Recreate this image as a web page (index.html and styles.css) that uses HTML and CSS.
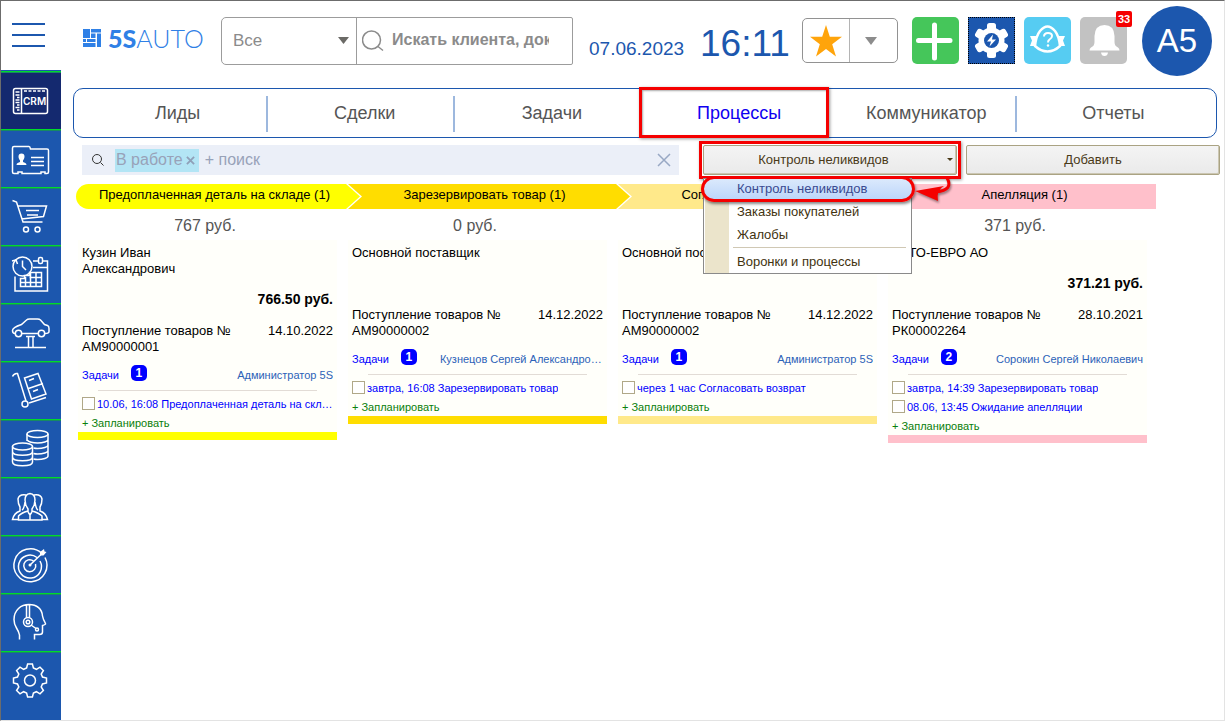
FILE: index.html
```html
<!DOCTYPE html>
<html lang="ru">
<head>
<meta charset="utf-8">
<title>5S AUTO — Процессы</title>
<link rel="stylesheet" href="styles.css">
</head>
<body>
<div class="app">
  <aside class="side">
    <button class="burger" type="button" aria-label="Меню"><span></span><span></span><span></span></button>
    <nav class="side-nav" aria-label="Разделы">
      <a class="side-item active" href="#" aria-label="CRM"><svg viewBox="0 0 44 44"><rect x="4.500" y="9.500" width="34" height="25" rx="2"/><path d="M12.500 10v24M6.500 13h4M6.500 16h4M8 18.500h2.500M6.500 21h4M6.500 23.500h4M8 26h2.500M6.500 28.500h4M8 31h2.500"/><path d="M15 12h22" stroke-dasharray="3 1.500"/><text x="14" y="26">CRM</text></svg></a>
      <a class="side-item" href="#" aria-label="Контакты"><svg viewBox="0 0 44 44"><path d="M5 9.500H20q1 0 1.500 2.500H38q1.500 0 1.500 1.500V35q0 1.500-1.500 1.500H36v-1.500h-4v1.500H13v-1.500H9v1.500H5q-1.500 0-1.500-1.500V11q0-1.500 1.500-1.500Z"/><path class="fill" d="M12.500 16.500c2 0 3 1.200 3 3s-.8 3-1.500 4v1.500c1.500.7 3.500 1 3.500 3H7.500c0-2 2-2.300 3.500-3V23.500c-.7-1-1.500-2.200-1.500-4s1-3 3-3Z"/><path d="M22 20.500h13M22 24.500h13M22 28.500h13"/></svg></a>
      <a class="side-item" href="#" aria-label="Корзина"><svg viewBox="0 0 44 44"><path d="M3.500 5.500l4 1.500L14 27H33.500M9 11H37.500L34.500 21.500L12.500 24M17 15.500h13M18 20h11"/><circle cx="17" cy="34.500" r="2.500"/><circle cx="28.500" cy="34.500" r="2.500"/></svg></a>
      <a class="side-item" href="#" aria-label="Календарь"><svg viewBox="0 0 44 44"><circle cx="13.500" cy="13.500" r="9.500"/><path d="M13.500 7.500v6l3.500 3.500M3 8l4-1 1.500 4M6 23.500V38H38.500V8H34M29.500 8H24M24 14.500H38.500"/><rect x="29.500" y="4.500" width="4" height="6" rx="1.500"/><path d="M11.500 25.500h4v-3h5v-3H32.500V33.500H11.500ZM11.500 29.500h21M20.500 24.500h12M16.500 24v9.500M21.500 20v13.500M27 20v13.500"/></svg></a>
      <a class="side-item" href="#" aria-label="Автосервис"><svg viewBox="0 0 44 44"><path d="M6 22.500q-2.500 0-2.500-3 0-3 9-6L17.500 9q1-1 3-1h8q2 0 3 1l4 4.500 3 1q1.500.5 1.500 3v3q0 2-4 2M13 22.500H29M17 25.500H26M19.500 26V36.500M24 26V36.500M6 36.500H37"/><circle cx="9.500" cy="22.500" r="3.200"/><circle cx="32.500" cy="22.500" r="3.200"/></svg></a>
      <a class="side-item" href="#" aria-label="Склад"><svg viewBox="0 0 44 44"><path d="M3.500 7.500Q5 4 8.500 4.500L17 32M15.500 9L29 4.500L37 25L22.500 30ZM19.500 19.500L34 14.500M20 11.500l5-2M24 22.500l5-2M20 34L37 28.500"/><circle cx="16" cy="35" r="3"/></svg></a>
      <a class="side-item" href="#" aria-label="Финансы"><svg viewBox="0 0 44 44"><ellipse cx="28.500" cy="7" rx="10.500" ry="3.500"/><path d="M18 7v7M39 7V29c0 2-5 3.500-10.500 3.500q-2 0-4-.5M39 12.500c0 2-5 3.500-10.500 3.500Q21 16 18 13M39 18c0 2-5 3.500-10.500 3.500q-2 0-4-.5M39 23.500c0 2-5 3.500-10.500 3.500q-2 0-4-.5"/><ellipse cx="13.500" cy="19.500" rx="10" ry="3.500"/><path d="M3.500 19.500V35c0 5 20 5 20 0V19.500M3.500 24.500c0 5 20 5 20 0M3.500 30c0 5 20 5 20 0"/></svg></a>
      <a class="side-item" href="#" aria-label="Клиенты"><svg viewBox="0 0 44 44"><path d="M16 15q0-6 5-6.500 5 .5 5 6.500 0 5-3 9v3M16 15q0 5 3 9v3M17 10q-7-1-8 4 0 5 2 8v4q-6 2-7.500 8.500H9M25 10q7-1 8 4 0 5-2 8v4q6 2 7.500 8.500H33M19 26q-7 2-9.500 5v4H33V31q-3-3-10-5M19 27l2 3 2-3M21 30v5M16 17q-1 7-3 8M26 17q1 7 3 8"/></svg></a>
      <a class="side-item" href="#" aria-label="Цели"><svg viewBox="0 0 44 44"><path d="M32.500 10A16.500 16.500 0 1 0 36 14.500M28 14.500A11.500 11.500 0 1 0 31 18M24.500 18A6 6 0 1 0 26.500 21M21 22L32 11.500"/><circle class="fill" cx="21" cy="22" r="1.500"/><path class="fill" d="M31 12.500V9l4-3 .5 2.500L37.500 9l-3 3.500Z"/></svg></a>
      <a class="side-item" href="#" aria-label="Поддержка"><svg viewBox="0 0 44 44"><path d="M10.500 38.500V34Q10 31 7.500 27 5 23 5 18.500C5 9 12 3.500 20 3.500S33 8 33.500 15q.5 3 3 7.500.5 1-3 2V31q0 2.500-3 2.500H25.500v5M17.500 4v13M20.500 4v13M22 24l5 3.500"/><circle cx="19" cy="21" r="4.500"/><circle cx="19" cy="21" r="1.800"/><circle cx="28" cy="28.500" r="1.500"/></svg></a>
      <a class="side-item" href="#" aria-label="Настройки"><svg viewBox="-21 -21.500 44 44"><path d="M-3.400-12.500L-2.400-16.500H2.400L3.400-12.500L6.400-11.200L10-13.400L13.400-10L11.200-6.400L12.500-3.400L16.500-2.400V2.400L12.500 3.400L11.200 6.400L13.400 10L10 13.400L6.400 11.200L3.400 12.500L2.400 16.500H-2.400L-3.400 12.500L-6.400 11.200L-10 13.400L-13.400 10L-11.200 6.400L-12.500 3.400L-16.500 2.400V-2.400L-12.500-3.400L-11.200-6.400L-13.400-10L-10-13.400L-6.400-11.200Z"/><circle r="5.500"/></svg></a>
    </nav>
  </aside>

  <div class="page">
    <header class="top">
      <a class="logo" href="#" aria-label="5S AUTO">
        <svg class="logo-mark" viewBox="0 0 18 18"><path d="M0 0h7v9H0zM8 0h10v3.500H8zM8 4.500h4.500V9H8zM14 4.500h4V18h-4zM0 10h3v3H0zM4 10h8.500v3H4zM0 14h12.500v4H0z"/></svg>
        <span class="logo-text"><b>5S</b>AUTO</span>
      </a>
      <form class="finder">
        <div class="finder-kind">
          <select aria-label="Где искать"><option>Все</option></select>
          <svg viewBox="0 0 12 8"><path d="M0 0h11L5.500 7Z"/></svg>
        </div>
        <label class="finder-text">
          <svg viewBox="0 0 22 22"><circle cx="9.500" cy="10" r="9"/><path d="M16 16.500l5 4"/></svg>
          <input type="text" aria-label="Поиск" placeholder="Искать клиента, документ">
        </label>
      </form>
      <span class="date">07.06.2023</span>
      <time class="clock">16:11</time>
      <div class="fav">
        <button type="button" aria-label="Избранное"><svg class="star" viewBox="0 0 32 32"><path d="M16 0l3.800 11.800H32l-9.800 7.400L26 31.500 16 24 6 31.500l3.800-12.300L0 11.800h12.200Z"/></svg></button>
        <button type="button" aria-label="Список избранного"><svg class="caret" viewBox="0 0 12 8"><path d="M0 0h12L6 8Z"/></svg></button>
      </div>
      <div class="tools">
        <button class="tool add" type="button" aria-label="Создать"><svg viewBox="0 0 47 47"><path d="M22.500 8v33M6.500 23.500h31.500"/></svg></button>
        <button class="tool auto" type="button" aria-label="Автоматизация"><svg viewBox="-23.500 -23.500 47 47"><g><rect x="-4.500" y="-17.500" width="9" height="35" rx="2.500"/><rect x="-4.500" y="-17.500" width="9" height="35" rx="2.500" transform="rotate(60)"/><rect x="-4.500" y="-17.500" width="9" height="35" rx="2.500" transform="rotate(-60)"/><circle r="13"/></g><circle class="hole" r="7.500"/><path d="M1.500-6L-4.500 1H-.5L-2 6L4.500-1H.5Z"/></svg></button>
        <button class="tool help" type="button" aria-label="Помощь"><svg viewBox="0 0 47 47"><path class="ribbon" d="M14 19H6l2 4.500L6 29h7ZM33 19h8l-2 4.500 2 5.500h-7Z"/><path class="dome" d="M23.500 9.500Q27 9.500 31 14 35 19 36 29 30 34.500 23.500 34.500T11 29Q12 19 16 14 20 9.500 23.500 9.500Z"/><path class="mark" d="M20 19.500q0-3.500 4-3.500t4 3q0 2-2.500 3.500-1.500 1-1.500 3"/><circle cx="24" cy="28.500" r="1.200"/></svg></button>
        <button class="tool bell" type="button" aria-label="Уведомления"><svg viewBox="0 0 47 47"><path d="M24.500 8q9.500 0 10 11v6q0 4 3.500 5.500 1.500 1 1.500 3H9.500q0-2 1.500-3 3.500-1.500 3.500-5.500v-6Q15 8 24.500 8ZM21 35.500h7q-.5 3.500-3.500 3.500T21 35.500Z"/></svg><span class="count">33</span></button>
      </div>
      <button class="avatar" type="button">A5</button>
    </header>

    <nav class="tabs" aria-label="CRM">
      <a href="#">Лиды</a>
      <a href="#">Сделки</a>
      <a href="#" class="before-current">Задачи</a>
      <a href="#" class="current">Процессы</a>
      <a href="#">Коммуникатор</a>
      <a href="#">Отчеты</a>
    </nav>

    <div class="filters">
      <div class="filter-box">
        <svg class="lens" viewBox="0 0 12 12"><circle cx="5" cy="5" r="4.500"/><path d="M8.500 8.500l3 3"/></svg>
        <span class="chip">В работе <button type="button" aria-label="Убрать фильтр"><svg viewBox="0 0 10 10"><path d="M1 1l8 8M9 1l-8 8"/></svg></button></span>
        <input type="text" aria-label="Добавить условие" placeholder="+ поиск">
        <button class="clear" type="button" aria-label="Очистить"><svg viewBox="0 0 14 14"><path d="M1 1l12 12M13 1L1 13"/></svg></button>
      </div>
      <div class="picker">
        <button class="btn" type="button" aria-haspopup="menu" aria-expanded="true">Контроль неликвидов</button>
        <div class="menu" role="menu">
          <button type="button" role="menuitem" class="chosen">Контроль неликвидов</button>
          <button type="button" role="menuitem">Заказы покупателей</button>
          <button type="button" role="menuitem">Жалобы</button>
          <hr>
          <button type="button" role="menuitem">Воронки и процессы</button>
        </div>
        <svg class="pointer" viewBox="0 0 40 28"><path class="tail" d="M33 1Q40 13 22 15"/><path class="head" d="M1 14L30 9Q22 13 24 24Z"/></svg>
      </div>
      <button class="btn plus" type="button">Добавить</button>
    </div>

    <main class="board">
      <section class="column yellow">
        <h2 class="stage">Предоплаченная деталь на складе (1)</h2>
        <p class="sum">767 руб.</p>
        <article class="card">
          <h3>Кузин Иван<br>Александрович</h3>
          <p class="price">766.50 руб.</p>
          <div class="doc"><span>Поступление товаров № AM90000001</span><span>14.10.2022</span></div>
          <div class="tasks"><a href="#">Задачи</a><span class="badge">1</span><a class="owner" href="#">Администратор 5S</a></div>
          <label class="task"><input type="checkbox"><span>10.06, 16:08 Предоплаченная деталь на складе</span></label>
          <a class="plan" href="#">+ Запланировать</a>
        </article>
      </section>
      <section class="column gold">
        <h2 class="stage">Зарезервировать товар (1)</h2>
        <p class="sum">0 руб.</p>
        <article class="card">
          <h3>Основной поставщик</h3>
          <p class="price"></p>
          <div class="doc"><span>Поступление товаров № AM90000002</span><span>14.12.2022</span></div>
          <div class="tasks"><a href="#">Задачи</a><span class="badge">1</span><a class="owner" href="#">Кузнецов Сергей Александрович</a></div>
          <label class="task"><input type="checkbox"><span>завтра, 16:08 Зарезервировать товар</span></label>
          <a class="plan" href="#">+ Запланировать</a>
        </article>
      </section>
      <section class="column sand">
        <h2 class="stage">Согласовать возврат (1)</h2>
        <p class="sum">0 руб.</p>
        <article class="card">
          <h3>Основной поставщик</h3>
          <p class="price"></p>
          <div class="doc"><span>Поступление товаров № AM90000002</span><span>14.12.2022</span></div>
          <div class="tasks"><a href="#">Задачи</a><span class="badge">1</span><a class="owner" href="#">Администратор 5S</a></div>
          <label class="task"><input type="checkbox"><span>через 1 час Согласовать возврат</span></label>
          <a class="plan" href="#">+ Запланировать</a>
        </article>
      </section>
      <section class="column pink">
        <h2 class="stage">Апелляция (1)</h2>
        <p class="sum">371 руб.</p>
        <article class="card">
          <h3>АВТО-ЕВРО АО</h3>
          <p class="price">371.21 руб.</p>
          <div class="doc"><span>Поступление товаров № РК00002264</span><span>28.10.2021</span></div>
          <div class="tasks"><a href="#">Задачи</a><span class="badge">2</span><a class="owner" href="#">Сорокин Сергей Николаевич</a></div>
          <label class="task"><input type="checkbox"><span>завтра, 14:39 Зарезервировать товар</span></label>
          <label class="task"><input type="checkbox"><span>08.06, 13:45 Ожидание апелляции</span></label>
          <a class="plan" href="#">+ Запланировать</a>
        </article>
      </section>
    </main>
  </div>
</div>
</body>
</html>
```
FILE: styles.css
```css
* { box-sizing: border-box; }

:root {
  --blue: #1c57ae;
  --line: #00dc28;
  --mark: #f50000;
}

body {
  margin: 0;
  background: #fff;
  color: #000;
  font: 13px/16px "Liberation Sans", Arial, sans-serif;
}

button, input, select { font: inherit; color: inherit; }
button { border: 0; padding: 0; background: none; cursor: pointer; }
a { text-decoration: none; color: inherit; }
h2, h3, p { margin: 0; font: inherit; }
svg { display: block; fill: none; flex: none; }

.app {
  display: flex;
  min-height: 100vh;
  border: 1px solid #e3e3e3;
  border-top-color: #6c6c6c;
  border-left-color: #6c6c6c;
}

/* side bar */
.side { width: 60px; flex: none; display: flex; flex-direction: column; }
.burger {
  height: 69px;
  padding: 0 16px 2px 11px;
  display: flex;
  flex-direction: column;
  justify-content: center;
  gap: 9px;
}
.burger span { height: 2px; background: var(--blue); }
.side-nav { flex: 1; background: var(--blue); padding-top: 1px; }
.side-item {
  display: flex;
  justify-content: center;
  align-items: center;
  height: 58px;
  border-top: 1px solid var(--line);
  box-shadow: inset 0 1px #178a63;
}
.side-item.active { background: #14296f; }
.side-item svg { width: 44px; height: 44px; stroke: #fff; stroke-width: 1.500; }
.side-item .fill { fill: #fff; stroke: none; }
.side-item text { font: 600 10px Inter, sans-serif; fill: #fff; stroke: none; }

/* header */
.page { flex: 1; min-width: 0; }
.top { height: 87px; padding: 5px 12px 12px 22px; display: flex; align-items: flex-start; }
.logo { display: flex; align-items: center; gap: 7px; margin-top: 17px; width: 138px; color: #2f80e6; }
.logo-mark { width: 18px; height: 18px; fill: #2f80e6; }
.logo-text { font: 300 25px/30px Lato, sans-serif; }
.logo-text b { font-weight: 900; }
.finder {
  display: flex;
  width: 352px;
  height: 48px;
  margin-top: 11px;
  border: 1px solid #9c9c9c;
  border-radius: 5px 2px 2px 5px;
  color: #8b8b8b;
  font-size: 17px;
}
.finder-kind { position: relative; width: 135px; border-right: 1px solid #9c9c9c; }
.finder-kind select {
  appearance: none;
  width: 100%;
  height: 100%;
  padding: 0 11px;
  border: 0;
  background: none;
}
.finder-kind svg { position: absolute; right: 6px; top: 19px; width: 12px; height: 8px; fill: #6b6a66; pointer-events: none; }
.finder-text { flex: 1; min-width: 0; display: flex; align-items: center; gap: 8px; padding: 0 23px 0 5px; }
.finder-text svg { width: 22px; height: 22px; stroke: #8b8b8b; stroke-width: 1.500; }
.finder-text input {
  width: 100%;
  min-width: 0;
  padding: 0 0 2px;
  border: 0;
  background: none;
  font-size: 16px;
  font-weight: bold;
}
.finder-text input::placeholder { color: #8b8b8b; opacity: 1; }
.date { margin: 32px 0 0 16px; width: 111px; font-size: 19px; line-height: 22px; color: var(--blue); }
.clock { margin-top: 17px; width: 101px; font-size: 37px; line-height: 42px; color: var(--blue); }
.fav {
  display: flex;
  width: 96px;
  height: 45px;
  margin: 12px 14px 0 auto;
  border: 1px solid #929292;
  border-radius: 5px;
}
.fav button { width: 46px; display: grid; place-items: center; }
.fav button + button { flex: 1; padding-right: 6px; border-left: 1px solid #b4b4b4; }
.star { width: 32px; height: 32px; fill: #ffa40b; }
.caret { width: 12px; height: 8px; fill: #8c8c8c; }
.tools { display: flex; gap: 9px; margin: 11px 15px 0 0; }
.tool { position: relative; width: 47px; height: 47px; border-radius: 5px; }
.tool svg { width: 47px; height: 47px; fill: #fff; }
.add { background: #45c65a; }
.add path { stroke: #fff; stroke-width: 5; stroke-linecap: round; }
.auto { background: var(--blue); border-radius: 0; outline: 1px dotted #000; outline-offset: -1px; }
.auto .hole { fill: var(--blue); }
.help { background: #56ccf2; }
.help .dome { fill: #56ccf2; stroke: #fff; stroke-width: 2.500; }
.help .mark { fill: none; stroke: #fff; stroke-width: 2; }
.bell { background: #c2c2c2; }
.count {
  position: absolute;
  top: -6px;
  right: -5px;
  width: 16px;
  border-radius: 2px;
  background: #f50000;
  color: #fff;
  font-size: 11px;
  font-weight: bold;
  text-align: center;
}
.avatar {
  width: 70px;
  height: 70px;
  border-radius: 50%;
  background: var(--blue);
  color: #fff;
  font-size: 33px;
}

/* tabs */
.tabs {
  display: flex;
  height: 50px;
  margin: 0 7px 0 12px;
  padding: 0 9px 0 10px;
  border: 1px solid var(--blue);
  border-radius: 10px;
  font-size: 18px;
  color: #555;
}
.tabs a { position: relative; flex: 1; display: grid; place-items: center; }
.tabs a:not(.current):not(.before-current):not(:last-child)::after {
  content: "";
  position: absolute;
  top: 7px;
  bottom: 5px;
  right: 3px;
  width: 2px;
  background: #9db8de;
}
.tabs .current { color: #1000f0; }
.tabs .current::before {
  content: "";
  position: absolute;
  inset: -2px 4px -1px -7px;
  border: 3px solid var(--mark);
  box-shadow: 1px 1px 3px #0006, inset 1px 1px 2px #0005;
}

/* filter row */
.filters { display: flex; margin: 7px 4px 0 21px; height: 30px; }
.filter-box {
  flex: 1;
  display: flex;
  align-items: center;
  margin-right: 24px;
  padding: 0 8px 0 10px;
  background: #ebeff8;
  color: #98a2b8;
  font-size: 16px;
}
.lens { width: 12px; height: 12px; stroke: #333; margin-right: 11px; }
.chip { display: flex; align-items: center; gap: 3px; height: 23px; padding: 0 4px 0 1px; background: #b3e5f5; white-space: nowrap; }
.chip svg { width: 9px; height: 9px; stroke: #8fa0b8; stroke-width: 2; }
.filter-box input { flex: 1; min-width: 0; border: 0; padding: 0 6px; background: none; }
.filter-box input::placeholder { color: #98a2b8; opacity: 1; }
.clear svg { width: 14px; height: 14px; stroke: #98a8c4; stroke-width: 1.500; }
.btn {
  width: 254px;
  height: 30px;
  border: 1px solid #aaa383;
  border-radius: 2px;
  background: linear-gradient(#f4f4f4, #eaeaea);
  box-shadow: inset -1px -1px #cbc6b2;
  color: #4a3a18;
}
.plus { margin-left: 9px; }
.picker { position: relative; }
.picker::before {
  content: "";
  position: absolute;
  inset: -4px;
  border: 3px solid var(--mark);
  box-shadow: 1px 1px 3px #0006;
}
.picker .btn { position: relative; padding-right: 13px; }
.picker .btn::after {
  content: "";
  position: absolute;
  right: 3px;
  top: 12px;
  border: 3px solid transparent;
  border-top-color: #4a3a18;
}
.menu {
  position: absolute;
  z-index: 10;
  top: 33px;
  left: 0;
  width: 209px;
  padding: 21px 1px 0;
  border: 1px solid #8a8a8a;
  background: linear-gradient(90deg, #fff 1px, #ebe4cb 1px 25px, #fff 25px);
  color: #42330f;
}
.menu button { display: block; width: 100%; height: 23px; padding-left: 32px; text-align: left; }
.menu .chosen {
  position: absolute;
  top: -3px;
  left: -3px;
  width: 214px;
  height: 26px;
  padding-left: 33px;
  border: 3px solid var(--mark);
  border-radius: 13px;
  background: linear-gradient(#dbe9fc, #bcd6fa);
  box-shadow: 1px 2px 3px #0007;
  color: #3a4a90;
}
.menu hr { margin: 1px 4px 2px 28px; border: 0; border-top: 1px solid #d0c8b4; }
.pointer { position: absolute; z-index: 11; left: 211px; top: 32px; width: 40px; height: 28px; filter: drop-shadow(1px 2px 1px #0006); }
.pointer .tail { stroke: var(--mark); stroke-width: 3; }
.pointer .head { fill: var(--mark); }

/* board */
.board { display: flex; align-items: flex-start; margin: 9px 0 0 15px; }
.column { flex: 0 1 270px; min-width: 0; --stage: #ff0; }
.gold { --stage: #ffdd00; }
.sand { --stage: #ffe98a; }
.pink { --stage: #ffc0cb; }
.stage {
  position: relative;
  height: 25px;
  padding: 0 0 3px 7px;
  display: grid;
  place-items: center;
  background: var(--stage);
}
.yellow .stage { border-radius: 13px 0 0 13px; }
.stage::before, .stage::after {
  content: "";
  position: absolute;
  z-index: 1;
  top: 0;
  left: 100%;
  width: 16px;
  height: 100%;
  background: #fff;
  clip-path: polygon(0 0, 2px 0, 100% 50%, 2px 100%, 0 100%);
}
.stage::after { width: 14px; background: var(--stage); clip-path: polygon(0 0, 100% 50%, 0 100%); }
.pink .stage::before, .pink .stage::after { content: none; }
.sum { padding: 7px 12px 5px 0; text-align: center; font-size: 16px; line-height: 19px; color: #555; }
.card {
  margin: 0 9px 0 2px;
  padding: 5px 4px 0;
  background: #fffffa;
  border-bottom: 8px solid var(--stage);
}
.price { height: 46px; text-align: right; font-size: 14px; font-weight: bold; line-height: 44px; }
.doc { display: flex; justify-content: space-between; gap: 16px; }
.doc span:first-child { width: 155px; }
.tasks {
  position: relative;
  display: flex;
  align-items: center;
  height: 35px;
  margin-bottom: 4px;
  padding-top: 5px;
  color: #00f;
  font-size: 11px;
}
.tasks::after { content: ""; position: absolute; left: 16px; right: 16px; bottom: -1px; height: 1px; background: #e2dcd6; }
.badge {
  width: 16px;
  margin: 0 23px 4px 12px;
  border-radius: 5px;
  background: #00f;
  color: #fff;
  font-size: 12px;
  font-weight: bold;
  text-align: center;
}
.owner { flex: 1; min-width: 0; overflow: hidden; text-overflow: ellipsis; white-space: nowrap; text-align: right; color: #2c62b8; }
.task { display: flex; align-items: center; gap: 2px; height: 19px; margin-right: -4px; font-size: 11px; color: #00f; }
.task input { appearance: none; flex: none; width: 13px; height: 13px; margin: 0; border: 1px solid #b0a888; background: #fff; }
.task span { overflow: hidden; text-overflow: ellipsis; white-space: nowrap; }
.plan { display: block; height: 19px; font-size: 11px; line-height: 20px; color: #0a800a; }
```
